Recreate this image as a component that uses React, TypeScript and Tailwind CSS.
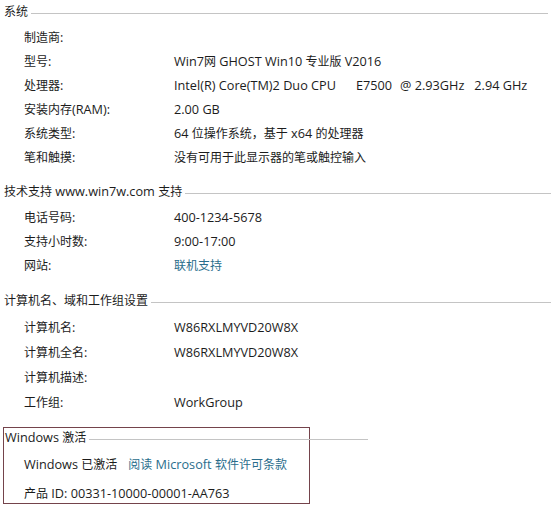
import React from "react";

const font = { fontFamily: '"Open Sans", "Noto Sans CJK SC", sans-serif' };

function T({ s }: { s: string }) {
  const parts = s.split(/([\u3000-\u9fff\uff00-\uffef]+)/).filter((p) => p.length > 0);
  return (
    <>
      {parts.map((p, i) =>
        /[\u3000-\u9fff\uff00-\uffef]/.test(p) ? (
          <span key={i} className="text-[12px]" style={{ fontFamily: '"Noto Sans CJK SC", sans-serif' }}>
            {p}
          </span>
        ) : (
          <span key={i}>{p}</span>
        )
      )}
    </>
  );
}

function Header({ title, mt, lineEnd = "pr-[1px]" }: { title: string; mt: string; lineEnd?: string }) {
  return (
    <div className={`flex items-center h-[24px] pl-[4px] ${lineEnd} ${mt}`}>
      <span className="whitespace-pre">
        <T s={title} />
      </span>
      <div className="flex-1 ml-[3px] h-px bg-[#c4c4c4] mt-[2px]" />
    </div>
  );
}

function Row({ label, value, h = "h-[24px]", link = false }: { label: string; value?: React.ReactNode; h?: string; link?: boolean }) {
  return (
    <div className={`flex items-center ${h} pl-[24px]`}>
      <span className="w-[150px] shrink-0 whitespace-pre">
        <T s={label} />
      </span>
      <span className={`whitespace-pre ${link ? "text-[#2a6d8c]" : ""}`}>
        {typeof value === "string" ? <T s={value} /> : value}
      </span>
    </div>
  );
}

export default function App() {
  return (
    <div className="w-[551px] h-[514px] bg-white text-[12.7px] text-[#1c1c1c] overflow-hidden" style={font}>
      <Header title="系统" mt="mt-0" lineEnd="pr-[3px]" />
      <div className="mt-[2px]">
        <Row label="制造商:" />
        <Row label="型号:" value="Win7网 GHOST Win10 专业版 V2016" />
        <Row
          label="处理器:"
          value={
            <span className="flex">
              <span>Intel(R) Core(TM)2 Duo CPU</span>
              <span className="ml-[20px]">E7500</span>
              <span className="ml-[8px]">@ 2.93GHz</span>
              <span className="ml-[10px]">2.94 GHz</span>
            </span>
          }
        />
        <Row label="安装内存(RAM):" value="2.00 GB" />
        <Row label="系统类型:" value="64 位操作系统，基于 x64 的处理器" />
        <Row label="笔和触摸:" value="没有可用于此显示器的笔或触控输入" />
      </div>
      <Header title="技术支持 www.win7w.com 支持" mt="mt-[10px]" lineEnd="pr-0" />
      <div className="mt-[2px]">
        <Row label="电话号码:" value="400-1234-5678" />
        <Row label="支持小时数:" value="9:00-17:00" />
        <Row label="网站:" value="联机支持" link />
      </div>
      <Header title="计算机名、域和工作组设置" mt="mt-[11px]" lineEnd="pr-0" />
      <div className="mt-[2px]">
        <Row label="计算机名:" value="W86RXLMYVD20W8X" h="h-[25px]" />
        <Row label="计算机全名:" value="W86RXLMYVD20W8X" h="h-[25px]" />
        <Row label="计算机描述:" h="h-[25px]" />
        <Row label="工作组:" value="WorkGroup" h="h-[25px]" />
      </div>
      <div className="mt-[12px] ml-[3px] w-[307px] border border-[#74434b]">
        <div className="flex items-center h-[20px] w-[364px] pl-[1px]">
          <span className="whitespace-pre">
            <T s="Windows 激活" />
          </span>
          <div className="flex-1 ml-[3px] h-px bg-[#c4c4c4] mt-[3px]" />
        </div>
        <div className="flex items-center h-[20px] mt-[7px] pl-[20px]">
          <span className="whitespace-pre">
            <T s="Windows 已激活" />
          </span>
          <span className="ml-[11px] text-[#2a6d8c] whitespace-pre">
            <T s="阅读 Microsoft 软件许可条款" />
          </span>
        </div>
        <div className="flex items-center h-[18px] mt-[10px] pl-[20px]">
          <span className="whitespace-pre">
            <T s="产品 ID: 00331-10000-00001-AA763" />
          </span>
        </div>
      </div>
    </div>
  );
}
